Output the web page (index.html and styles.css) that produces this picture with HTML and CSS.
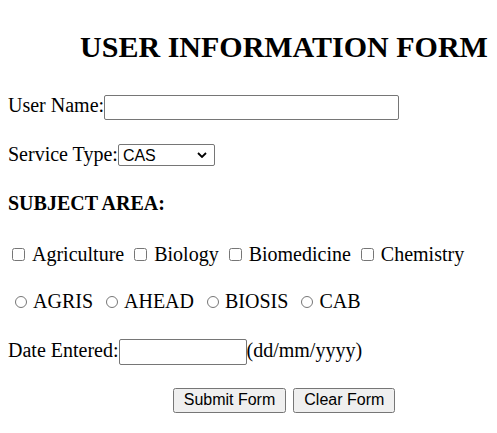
FILE: index.html
```html
<!DOCTYPE html>
<html lang="en">
<head>
    <meta charset="UTF-8">
    <meta name="viewport" content="width=device-width, initial-scale=1.0">
    <title>User Information Form</title>
    <link rel="stylesheet" href="styles.css">
</head>
<body>
    <div class="page">
        <h1 class="title">USER INFORMATION FORM</h1>
        <form id="user-form">
            <div class="row">
                <label for="user-name">User Name:</label><input type="text" id="user-name" name="user-name" class="name-input">
            </div>
            <div class="row">
                <label for="service-type">Service Type:</label><span class="select-wrap"><select id="service-type" name="service-type" class="service-select">
                    <option>CAS</option>
                    <option>DIALOG</option>
                    <option>STN</option>
                </select><svg class="chevron" width="10" height="6" viewBox="0 0 10 6"><path d="M1 1 L5 5 L9 1" fill="none" stroke="#000" stroke-width="1.8"/></svg></span>
            </div>
            <div class="row heading">SUBJECT AREA:</div>
            <div class="row checks">
                <input type="checkbox" id="agri" name="subject"><label for="agri">Agriculture</label>
                <input type="checkbox" id="bio" name="subject"><label for="bio">Biology</label>
                <input type="checkbox" id="biomed" name="subject"><label for="biomed">Biomedicine</label>
                <input type="checkbox" id="chem" name="subject"><label for="chem">Chemistry</label>
            </div>
            <div class="row radios">
                <input type="radio" id="agris" name="database"><label for="agris">AGRIS</label>
                <input type="radio" id="ahead" name="database"><label for="ahead">AHEAD</label>
                <input type="radio" id="biosis" name="database"><label for="biosis">BIOSIS</label>
                <input type="radio" id="cab" name="database"><label for="cab">CAB</label>
            </div>
            <div class="row">
                <label for="date-entered">Date Entered:</label><input type="text" id="date-entered" name="date-entered" class="date-input">(dd/mm/yyyy)
            </div>
            <div class="row buttons">
                <button type="submit" class="form-button">Submit Form</button>
                <button type="reset" class="form-button">Clear Form</button>
            </div>
        </form>
    </div>
</body>
</html>
```

FILE: styles.css
```css
body{
    margin: 8px;
    font-family: "Liberation Serif", "Times New Roman", serif;
    font-size: 20px;
    color: #000;
}
.title{
    margin: 22px 0 28px;
    padding-left: 71px;
    font-size: 30px;
    text-align: center;
    white-space: nowrap;
}
.row{
    height: 26px;
    line-height: 26px;
    margin-bottom: 23px;
    white-space: nowrap;
}
.heading{
    font-weight: bold;
}
.checks{
    margin-top: 25px;
    margin-bottom: 21px;
}
input[type="text"]{
    box-sizing: border-box;
    height: 25px;
    margin: 0;
    padding: 1px 2px;
    border: 1px solid #767676;
    border-radius: 2px;
    vertical-align: middle;
}
.name-input{
    width: 295px;
}
.date-input{
    width: 128px;
    height: 26px !important;
}
.select-wrap{
    position: relative;
    top: -1px;
    display: inline-block;
    vertical-align: middle;
    line-height: 0;
}
.service-select{
    box-sizing: border-box;
    width: 97px;
    height: 22px;
    margin: 0;
    padding: 0 0 0 4px;
    border: 1px solid #767676;
    border-radius: 2px;
    background: #fff;
    color: #000;
    appearance: none;
    -webkit-appearance: none;
    font-family: "Liberation Sans", Arial, sans-serif;
    font-size: 16px;
}
.chevron{
    position: absolute;
    right: 8px;
    top: 8px;
    pointer-events: none;
}
input[type="checkbox"]{
    width: 13px;
    height: 13px;
    margin: 3px 7px 5px 4px;
}
.checks label{
    margin-right: 1px;
}
input[type="radio"]{
    width: 12px;
    height: 12px;
    margin: 3px 6px 1px 7px;
}
.radios label{
    margin-right: 1px;
}
.buttons{
    padding-left: 71px;
    text-align: center;
}
.form-button{
    box-sizing: border-box;
    height: 25px;
    margin: -2px 1px 0;
    padding: 0 9px;
    font-family: "Liberation Sans", Arial, sans-serif;
    font-size: 16px;
    vertical-align: middle;
}
```
